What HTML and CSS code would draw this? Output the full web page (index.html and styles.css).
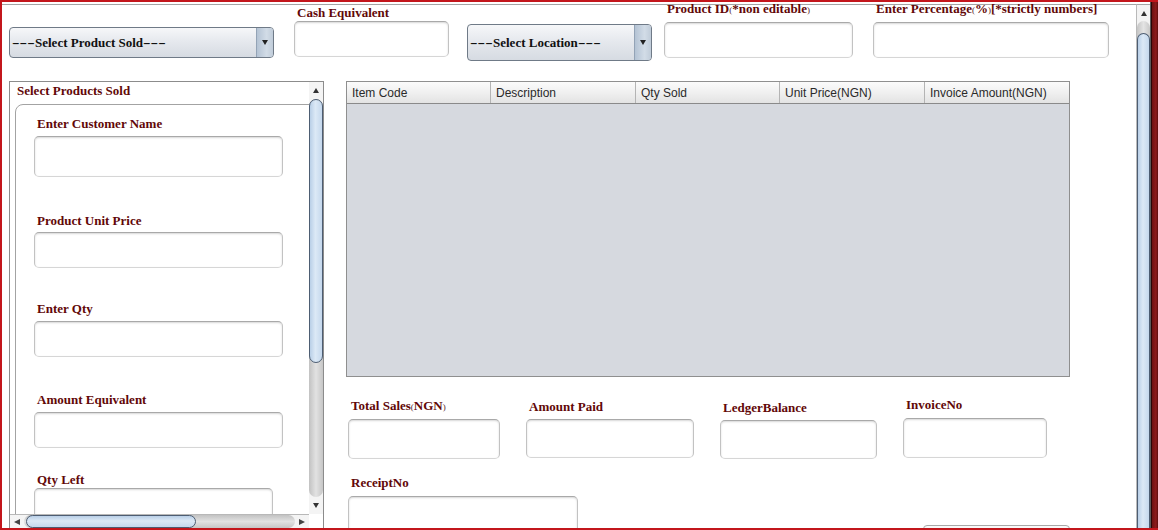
FILE: index.html
```html
<!DOCTYPE html>
<html>
<head>
<meta charset="utf-8">
<title>Sales Entry</title>
<link rel="stylesheet" href="styles.css">
</head>
<body>
<div class="frame">
  <div class="main">
    <div class="toprow">
      <div class="combo combo-product"><span class="combo-text"><span class="dash">---</span>Select Product Sold<span class="dash">---</span></span><span class="combo-btn"><i class="tri-down"></i></span></div>
      <div class="group g-cash"><div class="label">Cash Equivalent</div><div class="field f-top"></div></div>
      <div class="combo combo-location"><span class="combo-text"><span class="dash">---</span>Select Location<span class="dash">---</span></span><span class="combo-btn"><i class="tri-down"></i></span></div>
      <div class="group g-pid"><div class="label">Product ID<span class="paren">(</span>*non editable<span class="paren">)</span></div><div class="field f-top"></div></div>
      <div class="group g-pct"><div class="label">Enter Percentage<span class="paren">(</span>%<span class="paren">)</span>[*strictly numbers]</div><div class="field f-top"></div></div>
    </div>
    <div class="bodyrow">
      <div class="leftpane">
        <div class="lp-inner">
          <div class="lp-view">
            <div class="lp-title">Select Products Sold</div>
            <div class="lp-panel">
              <div class="lgroup lg1"><div class="label">Enter Customer Name</div><div class="field f-cust"></div></div>
              <div class="lgroup lg2"><div class="label">Product Unit Price</div><div class="field f-side"></div></div>
              <div class="lgroup lg3"><div class="label">Enter Qty</div><div class="field f-side"></div></div>
              <div class="lgroup lg4"><div class="label">Amount Equivalent</div><div class="field f-side"></div></div>
              <div class="lgroup lg5"><div class="label">Qty Left</div><div class="field f-left"></div></div>
            </div>
          </div>
          <div class="vbar">
            <div class="arrow-box"><i class="tri-up"></i></div>
            <div class="vtrack"><div class="vthumb"></div></div>
            <div class="arrow-box"><i class="tri-down"></i></div>
          </div>
        </div>
        <div class="hbar">
          <div class="harea">
            <div class="arrow-box-h"><i class="tri-left"></i></div>
            <div class="htrack"><div class="hthumb"></div></div>
            <div class="arrow-box-h"><i class="tri-right"></i></div>
          </div>
          <div class="corner"></div>
        </div>
      </div>
      <div class="rightcol">
        <div class="table">
          <div class="thead">
            <div class="th c1">Item Code</div>
            <div class="th c2">Description</div>
            <div class="th c3">Qty Sold</div>
            <div class="th c4">Unit Price(NGN)</div>
            <div class="th c5">Invoice Amount(NGN)</div>
          </div>
          <div class="tbody"></div>
        </div>
        <div class="totals">
          <div class="group g-ts"><div class="label">Total Sales<span class="paren">(</span>NGN<span class="paren">)</span></div><div class="field f-40"></div></div>
          <div class="group g-ap"><div class="label">Amount Paid</div><div class="field f-39"></div></div>
          <div class="group g-lb"><div class="label">LedgerBalance</div><div class="field f-39"></div></div>
          <div class="group g-inv"><div class="label">InvoiceNo</div><div class="field f-40"></div></div>
        </div>
        <div class="receipt-row">
          <div class="group g-rc"><div class="label">ReceiptNo</div><div class="field f-40"></div></div>
          <div class="button"></div>
        </div>
      </div>
    </div>
  </div>
  <div class="mainscroll">
    <div class="arrow-box-main"><i class="tri-up"></i></div>
    <div class="mtrack"><div class="mthumb"></div></div>
  </div>
  <div class="winedge"></div>
</div>
</body>
</html>
```

FILE: styles.css
```css
* { box-sizing: border-box; }
html, body { margin: 0; padding: 0; }
body {
  width: 1158px;
  height: 530px;
  overflow: hidden;
  background: #ffffff;
  font-family: "Liberation Serif", "DejaVu Serif", serif;
}
.frame {
  width: 1158px;
  height: 530px;
  display: flex;
  border-top: 2px solid #c3161c;
  border-left: 2px solid #c3161c;
  border-bottom: 2px solid #c3161c;
  background: #fff;
  overflow: hidden;
}
.main {
  width: 1134px;
  margin-top: 2px;
  border-top: 1px solid #a4a4a4;
  flex: none;
}
.mainscroll {
  width: 14px;
  flex: none;
  margin-top: 2px;
  border-top: 1px solid #a4a4a4;
  border-left: 1px solid #b9b9b9;
  background: #f3f3f3;
  display: flex;
  flex-direction: column;
}
.arrow-box-main {
  height: 16px;
  display: flex;
  align-items: center;
  justify-content: center;
  flex: none;
}
.mtrack {
  flex: 1;
  border-radius: 7px 7px 0 0;
  background: linear-gradient(to right, #c4c4c4, #e4e4e4 50%, #c8c8c8);
  display: flex;
  flex-direction: column;
}
.mthumb {
  margin-top: 12px;
  flex: 1;
  border: 1px solid #4d5d72;
  border-bottom: 0;
  border-radius: 7px 7px 0 0;
  background: linear-gradient(to right, #b9cfe7, #dce9f6 45%, #c5d8ed);
}
.winedge {
  width: 8px;
  flex: none;
  background: linear-gradient(to right, #5a5a5a 0, #5a5a5a 1px, #2a0606 1px, #2a0606 2px, #6d1212 2px, #8e1b1b 6px, #5a0d0d);
}

/* triangles */
.tri-up, .tri-down, .tri-left, .tri-right { display: block; width: 0; height: 0; }
.tri-up { border-left: 3px solid transparent; border-right: 3px solid transparent; border-bottom: 5px solid #333; }
.tri-down { border-left: 3px solid transparent; border-right: 3px solid transparent; border-top: 5px solid #333; }
.tri-left { border-top: 3px solid transparent; border-bottom: 3px solid transparent; border-right: 6px solid #444; }
.tri-right { border-top: 3px solid transparent; border-bottom: 3px solid transparent; border-left: 6px solid #444; }

/* labels & fields */
.label {
  font-size: 13px;
  line-height: 12px;
  font-weight: bold;
  color: #620808;
  white-space: nowrap;
  padding-left: 3px;
}
.paren {
  font-size: 9px;
  font-weight: normal;
  color: #5a2a2a;
}
.field {
  background: #fff;
  border: 1px solid #c2c2c2;
  border-top-color: #a9a9a9;
  border-bottom-color: #d6d6d6;
  border-radius: 5px;
  box-shadow: inset 0 1px 2px rgba(0,0,0,0.16);
}

/* top row */
.toprow {
  display: flex;
  align-items: flex-start;
  height: 76px;
}
.combo {
  display: flex;
  align-items: stretch;
  border: 1px solid #6f7a87;
  border-radius: 4px;
  background: linear-gradient(to bottom, #f6f7f9 0%, #e6e9ee 45%, #d6dbe2 100%);
  overflow: hidden;
}
.combo-text {
  flex: 1;
  display: flex;
  align-items: center;
  padding-left: 2px;
  font-size: 13px;
  font-weight: bold;
  color: #111;
  white-space: nowrap;
}
.dash {
  display: inline-block;
  transform: scaleX(1.75);
  transform-origin: left center;
  margin-right: 10px;
}
.combo-btn {
  width: 17px;
  flex: none;
  border-left: 1px solid #93a3b6;
  background: linear-gradient(to right, #b4c3d4, #d2dce7 60%, #c0ccd9);
  display: flex;
  align-items: center;
  justify-content: center;
}
.combo-btn .tri-down { border-top-color: #222; }
.combo-product { margin-left: 7px; margin-top: 22px; width: 265px; height: 31px; }
.combo-location { margin-left: 18px; margin-top: 19px; width: 185px; height: 37px; }
.f-top { height: 36px; }
.g-cash { margin-left: 20px; width: 155px; margin-top: 2px; }
.g-cash .label { margin-bottom: 2px; }
.g-pid { margin-left: 12px; width: 189px; margin-top: -2px; }
.g-pid .label { margin-bottom: 6px; }
.g-pct { margin-left: 20px; width: 236px; margin-top: -2px; }
.g-pct .label { margin-bottom: 6px; }

/* body */
.bodyrow {
  display: flex;
  align-items: flex-start;
}
.leftpane {
  margin-left: 7px;
  width: 315px;
  height: 448px;
  border: 1px solid #8c8c8c;
  display: flex;
  flex-direction: column;
  flex: none;
}
.lp-inner {
  height: 432px;
  display: flex;
}
.lp-view {
  width: 299px;
  overflow: hidden;
}
.lp-title {
  margin-top: 3px;
  padding-left: 7px;
  font-size: 13px;
  line-height: 12px;
  font-weight: bold;
  color: #620808;
}
.lp-panel {
  margin-top: 7px;
  margin-left: 5px;
  width: 320px;
  height: 420px;
  border: 1px solid #a3a3a3;
  border-radius: 8px 8px 0 0;
}
.lgroup { padding-left: 18px; }
.lg1 { margin-top: 13px; }
.lg1 .label { margin-bottom: 6px; }
.lg2 { margin-top: 38px; }
.lg2 .label { margin-bottom: 5px; }
.lg3 { margin-top: 35px; }
.lg3 .label { margin-bottom: 6px; }
.lg4 { margin-top: 37px; }
.lg4 .label { margin-bottom: 6px; }
.lg5 { margin-top: 26px; }
.lg5 .label { margin-bottom: 2px; }
.f-cust { width: 249px; height: 41px; }
.f-side { width: 249px; height: 36px; }
.f-left { width: 239px; height: 40px; }

.vbar {
  width: 14px;
  flex: none;
  background: #f4f4f4;
  display: flex;
  flex-direction: column;
}
.arrow-box {
  height: 17px;
  flex: none;
  display: flex;
  align-items: center;
  justify-content: center;
}
.vtrack {
  flex: 1;
  border-radius: 7px;
  background: linear-gradient(to right, #c2c2c2, #e2e2e2 50%, #c6c6c6);
  display: flex;
  flex-direction: column;
}
.vthumb {
  height: 264px;
  border: 1px solid #4d5d72;
  border-radius: 7px;
  background: linear-gradient(to right, #b9cfe7, #dce9f6 45%, #c5d8ed);
}
.hbar {
  height: 14px;
  display: flex;
  flex: none;
}
.harea {
  width: 299px;
  display: flex;
  background: #f4f4f4;
  border-top: 1px solid #b8b8b8;
}
.arrow-box-h {
  width: 14px;
  flex: none;
  display: flex;
  align-items: center;
  justify-content: center;
}
.htrack {
  flex: 1;
  border-radius: 7px;
  background: linear-gradient(to bottom, #c2c2c2, #e2e2e2 50%, #c6c6c6);
  display: flex;
}
.hthumb {
  width: 170px;
  margin-left: 2px;
  border: 1px solid #4d5d72;
  border-radius: 7px;
  background: linear-gradient(to bottom, #b9cfe7, #dce9f6 45%, #c5d8ed);
}
.corner { width: 14px; background: #fff; }

/* right column */
.rightcol {
  margin-left: 22px;
  display: flex;
  flex-direction: column;
}
.table {
  width: 724px;
  height: 296px;
  border: 1px solid #8f8f8f;
  display: flex;
  flex-direction: column;
}
.thead {
  display: flex;
  height: 22px;
  border-bottom: 1px solid #8a8a8a;
  background: linear-gradient(to bottom, #fbfbfb, #f0f0f0 50%, #e3e3e3);
}
.th {
  font-family: "Liberation Sans", Arial, sans-serif;
  font-size: 12px;
  color: #2a2a2a;
  padding-left: 5px;
  display: flex;
  align-items: center;
  border-right: 1px solid #b4b4b4;
  white-space: nowrap;
}
.c1 { width: 144px; }
.c2 { width: 145px; }
.c3 { width: 144px; }
.c4 { width: 145px; }
.c5 { width: 144px; border-right: 0; }
.tbody { flex: 1; background: #d6d9df; }

.totals {
  display: flex;
  align-items: flex-start;
  margin-top: 22px;
  margin-left: 2px;
}
.g-ts { width: 152px; margin-top: 1px; }
.g-ap { width: 168px; margin-left: 26px; margin-top: 2px; }
.g-lb { width: 157px; margin-left: 26px; margin-top: 3px; }
.g-inv { width: 144px; margin-left: 26px; margin-top: 0; }
.g-ts .label, .g-ap .label, .g-lb .label { margin-bottom: 6px; }
.g-inv .label { margin-bottom: 7px; }
.f-40 { height: 40px; }
.f-39 { height: 39px; }

.receipt-row {
  display: flex;
  align-items: flex-start;
  margin-top: 18px;
  margin-left: 2px;
}
.g-rc { width: 230px; }
.g-rc .label { margin-bottom: 7px; }
.button {
  margin-left: 345px;
  margin-top: 48px;
  width: 147px;
  height: 30px;
  border: 1px solid #a8a8a8;
  border-radius: 4px;
  background: linear-gradient(to bottom, #fafafa, #e4e4e4);
}
```
